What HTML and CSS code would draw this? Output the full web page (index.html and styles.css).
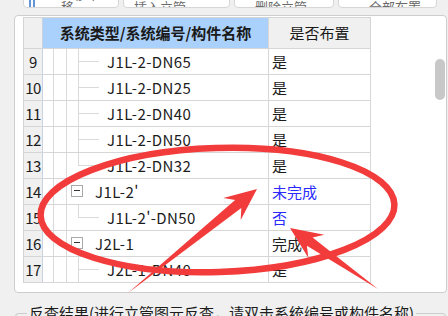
FILE: index.html
```html
<!DOCTYPE html>
<html lang="zh">
<head>
<meta charset="utf-8">
<link rel="stylesheet" href="styles.css">
</head>
<body>
<div class="page">
  <div class="toolbar">
    <div class="btn b1"><svg class="ico" width="12" height="20" viewBox="0 0 12 20"><path d="M2 6v14M6 6v14" stroke="#3a7bd5" stroke-width="1.6"/><path d="M9 14v6M7 17h4" stroke="#f08a24" stroke-width="1.6"/></svg><span class="bt">上移下移</span></div>
    <div class="btn b2"><span class="bt">插入立管</span></div>
    <div class="btn b3"><span class="bt">删除立管</span></div>
    <div class="btn b4"><span class="bt">全部布置</span></div>
  </div>
  <div class="panel">
    <div class="grid">
      <div class="cell corner"></div>
      <div class="cell hd1">系统类型/系统编号/构件名称</div>
      <div class="cell hd2">是否布置</div>

      <div class="cell rn">9</div>
      <div class="cell tree"><span class="g g1"></span><span class="g g2"></span><span class="c"></span><span class="nm">J1L-2-DN65</span></div>
      <div class="cell st">是</div>

      <div class="cell rn">10</div>
      <div class="cell tree"><span class="g g1"></span><span class="g g2"></span><span class="c"></span><span class="nm">J1L-2-DN25</span></div>
      <div class="cell st">是</div>

      <div class="cell rn">11</div>
      <div class="cell tree"><span class="g g1"></span><span class="g g2"></span><span class="c"></span><span class="nm">J1L-2-DN40</span></div>
      <div class="cell st">是</div>

      <div class="cell rn">12</div>
      <div class="cell tree"><span class="g g1"></span><span class="g g2"></span><span class="c"></span><span class="nm">J1L-2-DN50</span></div>
      <div class="cell st">是</div>

      <div class="cell rn">13</div>
      <div class="cell tree"><span class="g g1"></span><span class="g g2"></span><span class="c last"></span><span class="nm">J1L-2-DN32</span></div>
      <div class="cell st">是</div>

      <div class="cell rn">14</div>
      <div class="cell tree"><span class="g g1"></span><span class="g g2s"></span><span class="box"></span><span class="nm pn">J1L-2'</span></div>
      <div class="cell st blue">未完成</div>

      <div class="cell rn">15</div>
      <div class="cell tree"><span class="g g1"></span><span class="g g2"></span><span class="c last"></span><span class="nm">J1L-2'-DN50</span></div>
      <div class="cell st blue">否</div>

      <div class="cell rn">16</div>
      <div class="cell tree"><span class="g g1"></span><span class="g g2s"></span><span class="box"></span><span class="nm pn">J2L-1</span></div>
      <div class="cell st">完成</div>

      <div class="cell rn">17</div>
      <div class="cell tree"><span class="g g1"></span><span class="g g2"></span><span class="c"></span><span class="nm">J2L-1-DN40</span></div>
      <div class="cell st">是</div>
    </div>
    <div class="track"><div class="thumb"></div></div>
  </div>
  <div class="group">
    <span class="gl"></span>
    <span class="gt">反查结果(进行立管图元反查，请双击系统编号或构件名称)</span>
    <span class="gr"></span>
  </div>
</div>
<svg class="overlay" width="448" height="316" viewBox="0 0 448 316">
  <ellipse cx="217.5" cy="210" rx="177" ry="62" transform="rotate(-1.8 217.5 210)" fill="none" stroke="#f23b3b" stroke-width="6.5"/>
  <polygon points="128,293 241.3,207.9 240.7,219.9 257,189 223.3,198.1 235.1,200.1" fill="#f23b3b"/>
  <polygon points="378,289 312.6,237.6 324.3,234.7 290,228 308.3,257.7 306.9,245.8" fill="#f23b3b"/>
</svg>
</body>
</html>
```

FILE: styles.css
```css
html, body {
  margin: 0;
  padding: 0;
}
body {
  width: 448px;
  height: 316px;
  overflow: hidden;
  background: #f0f0f0;
  font-family: "Noto Sans CJK SC", "Noto Sans", sans-serif;
  font-size: 15px;
  color: #1c1c1c;
}
.page {
  margin-top: -16px;
  padding-top: 0;
}
.toolbar {
  display: flex;
  gap: 4px;
  height: 24px;
  padding-left: 23px;
}
.btn {
  box-sizing: border-box;
  height: 24px;
  background: #fff;
  border: 1px solid #d6d6d6;
  border-radius: 4px;
  display: flex;
  align-items: flex-end;
  padding: 0 6px 0 4px;
  overflow: hidden;
}
.btn .bt {
  font-size: 13px;
  line-height: 13px;
  color: #6a6a6a;
  margin-bottom: -6px;
}
.ico { flex: none; margin-right: 21px; margin-bottom: -6px; }
.b1 { width: 96px; }
.b2 { width: 107px; padding-left: 10px; }
.b3 { width: 100px; padding-left: 20px; }
.b4 { width: 99px; padding-left: 30px; }

.panel {
  box-sizing: border-box;
  margin: 7px 0 0 14px;
  width: 433px;
  height: 278px;
  background: #fff;
  border: 1px solid #cdcdcd;
  border-radius: 4px;
  padding: 1px 0 0 8px;
  display: flex;
  overflow: hidden;
}
.grid {
  display: grid;
  grid-template-columns: 19px 226px 102px;
  grid-template-rows: 31px;
  grid-auto-rows: 26px;
  border-left: 1px solid #d4d4d4;
  border-top: 1px solid #d4d4d4;
  align-self: flex-start;
}
.cell {
  box-sizing: border-box;
  border-right: 1px solid #d6d6d6;
  border-bottom: 1px solid #d6d6d6;
  line-height: 25px;
  white-space: nowrap;
  overflow: hidden;
}
.corner { background: #f0f0f0; border-right-color: #c9d3e0; }
.hd1 {
  background: #aad1fb;
  font-weight: bold;
  text-align: center;
  line-height: 30px;
  color: #1a1a1a;
}
.hd2 {
  background: #f0f0f0;
  text-align: center;
  line-height: 30px;
  color: #1a1a1a;
}
.rn {
  background: #f0f0f0;
  text-align: center;
  border-right-color: #c9d3e0;
  letter-spacing: -0.5px;
}
.st { padding-left: 3px; }
.blue { color: #2a2aff; }

.tree {
  display: flex;
  align-items: stretch;
  padding-left: 10px;
}
.g {
  flex: none;
  border-left: 1px solid #dadada;
  margin-bottom: -1px;
}
.g1 { width: 12px; }
.g2 { width: 11px; }
.g2s { flex: none; width: 4px; border-left: 1px solid #dadada; margin-bottom: -1px; }
.c {
  flex: none;
  width: 29px;
  position: relative;
}
.c::before {
  content: "";
  position: absolute;
  left: 0;
  top: 0;
  bottom: -1px;
  border-left: 1px solid #dadada;
}
.c.last::before { bottom: 12px; }
.c::after {
  content: "";
  position: absolute;
  left: 0;
  top: 12px;
  width: 21px;
  border-top: 1px solid #dadada;
}
.box {
  flex: none;
  box-sizing: border-box;
  width: 12px;
  height: 12px;
  margin-top: 6px;
  border: 1px solid #a8a8a8;
  background: #fff;
  position: relative;
}
.box::after {
  content: "";
  position: absolute;
  left: 2px;
  right: 2px;
  top: 4px;
  border-top: 1px solid #333;
}
.nm { color: #1c1c1c; letter-spacing: 0.4px; }
.pn { margin-left: 12px; }

.track {
  margin-left: auto;
  margin-right: 1px;
  width: 10px;
}
.thumb {
  margin-top: 42px;
  height: 41px;
  background: #c8c8c8;
  border-radius: 5px;
}

.group {
  display: flex;
  align-items: center;
  margin: 10px 0 0 15px;
  width: 431px;
  height: 20px;
}
.gl {
  flex: none;
  align-self: flex-end;
  width: 12px;
  height: 10px;
  box-sizing: border-box;
  border-top: 1px solid #cdcdcd;
  border-left: 1px solid #cdcdcd;
  border-top-left-radius: 4px;
}
.gt {
  padding: 0 2px;
  line-height: 20px;
  color: #1c1c1c;
  white-space: nowrap;
}
.gr {
  flex: 1;
  align-self: flex-end;
  height: 10px;
  box-sizing: border-box;
  border-top: 1px solid #cdcdcd;
  border-right: 1px solid #cdcdcd;
  border-top-right-radius: 4px;
}

.overlay {
  position: absolute;
  left: 0;
  top: 0;
}
```
